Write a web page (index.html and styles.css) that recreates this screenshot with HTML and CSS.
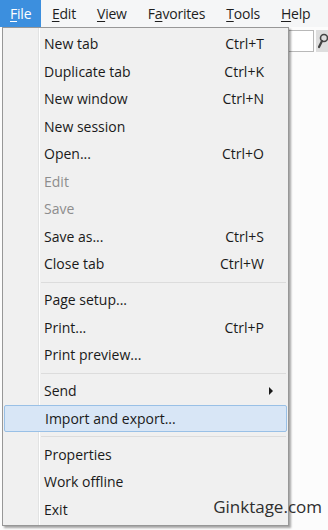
FILE: index.html
```html
<!DOCTYPE html>
<html lang="en">
<head>
    <meta charset="UTF-8">
    <title>File menu</title>
    <link rel="stylesheet" href="styles.css">
</head>
<body>

    <div class="menubar">
        <span class="top-item active"><u>F</u>ile</span>
        <span class="top-item"><u>E</u>dit</span>
        <span class="top-item"><u>V</u>iew</span>
        <span class="top-item">F<u>a</u>vorites</span>
        <span class="top-item"><u>T</u>ools</span>
        <span class="top-item"><u>H</u>elp</span>
    </div>

    <div class="page">
        <div class="toolbar">
            <div class="search-box"></div>
            <div class="search-btn">
                <svg width="10" height="16" viewBox="0 0 10 16">
                    <circle cx="6" cy="5" r="3.5" fill="none" stroke="#444" stroke-width="1.6"/>
                    <path d="M4 8 L1 14" stroke="#444" stroke-width="2.2" stroke-linecap="round"/>
                </svg>
            </div>
        </div>

        <!-- dropdown of the File menu -->
        <div class="menu">
            <div class="item"><span>New tab</span><span class="key">Ctrl+T</span></div>
            <div class="item"><span>Duplicate tab</span><span class="key">Ctrl+K</span></div>
            <div class="item"><span>New window</span><span class="key">Ctrl+N</span></div>
            <div class="item"><span>New session</span></div>
            <div class="item"><span>Open...</span><span class="key">Ctrl+O</span></div>
            <div class="item disabled"><span>Edit</span></div>
            <div class="item disabled"><span>Save</span></div>
            <div class="item"><span>Save as...</span><span class="key">Ctrl+S</span></div>
            <div class="item"><span>Close tab</span><span class="key">Ctrl+W</span></div>
            <div class="sep"></div>
            <div class="item"><span>Page setup...</span></div>
            <div class="item"><span>Print...</span><span class="key">Ctrl+P</span></div>
            <div class="item"><span>Print preview...</span></div>
            <div class="sep"></div>
            <div class="item"><span>Send</span><span class="arrow"></span></div>
            <div class="item hover"><span>Import and export...</span></div>
            <div class="sep"></div>
            <div class="item"><span>Properties</span></div>
            <div class="item"><span>Work offline</span></div>
            <div class="item"><span>Exit</span></div>
        </div>

        <div class="watermark">Ginktage.com</div>
    </div>

</body>
</html>
```

FILE: styles.css
```css
body {
    margin: 0;
    font-family: 'Open Sans', 'Noto Sans', sans-serif;
    font-size: 14px;
    color: #1a1a1a;
    background-color: #fcfcfc;
    width: 328px;
    height: 530px;
    overflow: hidden;
}

.menubar {
    display: flex;
    height: 27px;
    background-color: #f5f6f7;
    font-size: 14px;
    letter-spacing: -0.2px;
}

.top-item {
    padding: 0 10.5px;
    line-height: 27px;
    color: #1e1e1e;
    white-space: nowrap;
}

.top-item.active {
    background-color: #3c8fde;
    color: #fff;
    padding: 0 10px 0 10px;
}

.top-item u {
    text-underline-offset: 2px;
}

.page {
    position: relative;
    height: 503px;
}

.toolbar {
    display: flex;
    justify-content: flex-end;
    gap: 2px;
    padding-top: 3px;
}

.search-box {
    width: 26px;
    height: 20px;
    background-color: #fff;
    border: 1px solid #b8b8b8;
}

.search-btn {
    width: 12px;
    height: 22px;
    background-color: #dedede;
    display: flex;
    align-items: center;
    justify-content: flex-end;
}

.menu {
    position: absolute;
    left: 2px;
    top: 0;
    width: 285px;
    padding: 2px 0;
    background-color: #f0f0f0;
    background-image: linear-gradient(to right, transparent 35px, #e2e3e3 35px, #e2e3e3 36px, #fff 36px, #fff 37px, transparent 37px);
    border: 1px solid #979797;
    box-shadow: 2px 2px 2px rgba(0, 0, 0, 0.35);
}

.item {
    display: flex;
    align-items: center;
    height: 27.5px;
    padding: 0 24px 0 41px;
    box-sizing: border-box;
}

.item .key {
    margin-left: auto;
}

.item.disabled {
    color: #8d8d8d;
}

.item.hover {
    background-color: #d8e6f6;
    border: 1px solid #99c0e6;
    border-radius: 2px;
    margin: 0 1px;
    padding-left: 40px;
}

.arrow {
    margin-left: auto;
    margin-right: -9px;
    width: 0;
    height: 0;
    border-top: 4px solid transparent;
    border-bottom: 4px solid transparent;
    border-left: 4px solid #1a1a1a;
}

.sep {
    height: 8.5px;
    margin-left: 38px;
    margin-right: 2px;
    background-image: linear-gradient(#dcdcdc, #dcdcdc);
    background-size: 100% 1px;
    background-position: 0 4px;
    background-repeat: no-repeat;
}

.watermark {
    position: absolute;
    right: 6px;
    bottom: 12px;
    font-size: 17px;
    color: #2e2e2e;
}
```
